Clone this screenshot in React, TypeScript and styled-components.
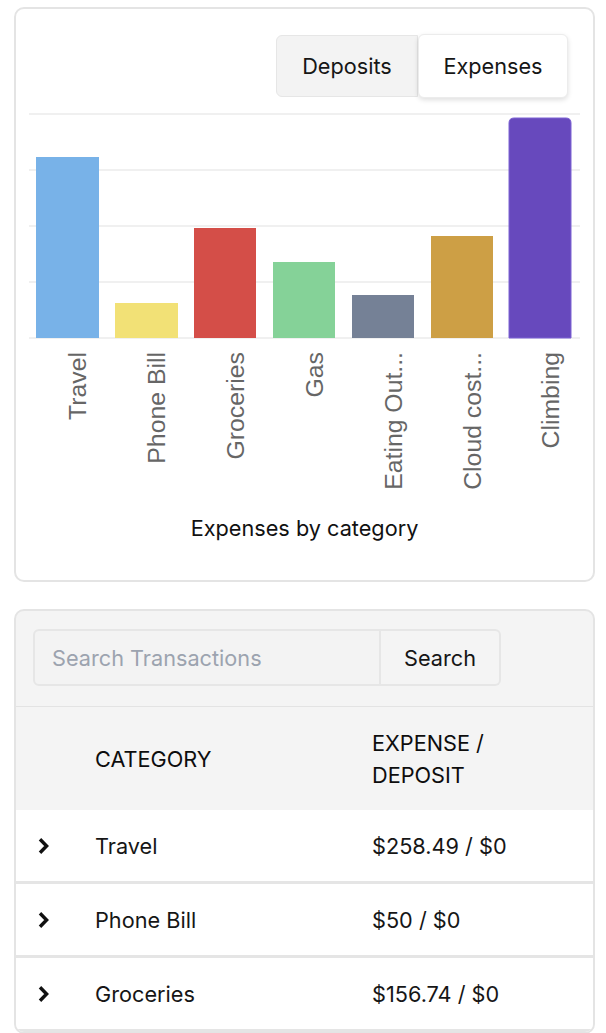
import styled, { createGlobalStyle } from "styled-components";

const GlobalStyle = createGlobalStyle`
  html, body {
    margin: 0;
    background: #ffffff;
    font-family: Inter, "Noto Sans", "Liberation Sans", sans-serif;
    color: #161616;
  }
  * { box-sizing: border-box; }
`;

const Page = styled.div`
  display: flex;
  flex-direction: column;
  gap: 27px;
  padding: 7px 11px 0 14px;
`;

const Card = styled.section`
  border: 2px solid #e4e4e4;
  border-radius: 10px;
  background: #ffffff;
`;

const Toolbar = styled.div`
  display: flex;
  justify-content: flex-end;
  padding: 25px 25px 0;
`;

const Toggle = styled.div`
  display: flex;
  align-items: center;
`;

interface IToggleButton {
  active?: boolean;
}

const ToggleButton = styled.button<IToggleButton>`
  font-family: inherit;
  font-size: 21.7px;
  color: #161616;
  cursor: pointer;
  height: ${(p) => (p.active ? "64px" : "62px")};
  width: ${(p) => (p.active ? "150px" : "142px")};
  background: ${(p) => (p.active ? "#ffffff" : "#f3f3f3")};
  border: ${(p) => (p.active ? "1px solid #ececec" : "1px solid #e6e6e6")};
  border-radius: ${(p) => (p.active ? "6px" : "6px 0 0 6px")};
  box-shadow: ${(p) => (p.active ? "0 2px 5px rgba(0,0,0,0.13)" : "none")};
  padding: 0;
`;

const ChartSvg = styled.svg`
  display: block;
  margin-top: 6px;
`;

const ChartTitle = styled.div`
  text-align: center;
  font-size: 21.7px;
  line-height: 28px;
  margin-top: 14px;
  padding-bottom: 38px;
  color: #111111;
`;

const TableCard = styled(Card)`
  background: #f4f4f4;
  overflow: hidden;
`;

const SearchBar = styled.form`
  display: flex;
  padding: 18px 0 20px 17px;
`;

const SearchInput = styled.input`
  width: 348px;
  height: 57px;
  font-family: inherit;
  font-size: 21.7px;
  padding: 0 17px;
  background: #f3f3f3;
  border: 2px solid #e6e6e6;
  border-radius: 6px 0 0 6px;
  color: #161616;
  outline: none;
  &::placeholder {
    color: #9ca3af;
  }
`;

const SearchButton = styled.button`
  width: 120px;
  height: 57px;
  font-family: inherit;
  font-size: 21.7px;
  color: #161616;
  background: #f4f4f4;
  border: 2px solid #e6e6e6;
  border-left: none;
  border-radius: 0 6px 6px 0;
  padding: 0;
`;

const Row = styled.div<{ header?: boolean }>`
  display: grid;
  grid-template-columns: 79px 277px 1fr;
  align-items: center;
  height: ${(p) => (p.header ? "104px" : "74px")};
  background: ${(p) => (p.header ? "#f4f4f4" : "#ffffff")};
  border-top: ${(p) => (p.header ? "1px solid #e3e3e3" : "none")};
  border-bottom: ${(p) => (p.header ? "none" : "3px solid #e5e5e5")};
  font-size: 21.7px;
  line-height: 32px;
`;

const HeadCell = styled.div`
  font-weight: 400;
  text-transform: uppercase;
  color: #0d0d0d;
  max-width: 150px;
`;

const Cell = styled.div`
  color: #161616;
`;

const ChevronCell = styled.div`
  display: flex;
  align-items: center;
  padding-left: 22px;
`;

const Chevron = () => (
  <svg width="12" height="18" viewBox="0 0 12 18" fill="none">
    <polyline
      points="2,2.2 8.6,9 2,15.8"
      stroke="#111"
      strokeWidth="3.4"
      strokeLinejoin="miter"
    />
  </svg>
);

interface IBar {
  label: string;
  x: number;
  w: number;
  top: number;
  color: string;
}

const bars: IBar[] = [
  { label: "Travel", x: 20, w: 63, top: 53, color: "#78b2e8" },
  { label: "Phone Bill", x: 99, w: 63, top: 199, color: "#f2e176" },
  { label: "Groceries", x: 178, w: 62, top: 124, color: "#d44e48" },
  { label: "Gas", x: 257, w: 62, top: 158, color: "#85d298" },
  { label: "Eating Out...", x: 336, w: 62, top: 191, color: "#758196" },
  { label: "Cloud cost...", x: 415, w: 62, top: 132, color: "#cd9f45" },
  { label: "Climbing", x: 493, w: 62, top: 14, color: "#6749bd" },
];

const BASE = 234;
const grid = [10, 66, 122, 178, 234];

const BarChart = () => (
  <ChartSvg width="577" height="396" viewBox="0 0 577 396">
    {grid.map((y) => (
      <line key={y} x1="13" x2="564" y1={y} y2={y} stroke="#f0f0f0" strokeWidth="2" />
    ))}
    {bars.map((b, i) => {
      const last = i === bars.length - 1;
      if (last) {
        const r = 5;
        const d = `M${b.x},${BASE} V${b.top + r} Q${b.x},${b.top} ${b.x + r},${b.top} H${
          b.x + b.w - r
        } Q${b.x + b.w},${b.top} ${b.x + b.w},${b.top + r} V${BASE} Z`;
        return <path key={b.label} d={d} fill={b.color} stroke="#7c62d4" strokeWidth="1" />;
      }
      return <rect key={b.label} x={b.x} y={b.top} width={b.w} height={BASE - b.top} fill={b.color} />;
    })}
    {bars.map((b) => {
      const tx = b.x + b.w / 2 + 18.5;
      const ty = 248;
      return (
        <text
          key={b.label}
          x={tx}
          y={ty}
          transform={`rotate(-90 ${tx} ${ty})`}
          textAnchor="end"
          fontFamily='"Liberation Sans", Arial, sans-serif'
          fontSize="24.8"
          fill="#666666"
        >
          {b.label}
        </text>
      );
    })}
  </ChartSvg>
);

const rows = [
  { category: "Travel", amount: "$258.49 / $0" },
  { category: "Phone Bill", amount: "$50 / $0" },
  { category: "Groceries", amount: "$156.74 / $0" },
];

const App = () => {
  return (
    <>
      <GlobalStyle />
      <Page>
        <Card>
          <Toolbar>
            <Toggle>
              <ToggleButton>Deposits</ToggleButton>
              <ToggleButton active>Expenses</ToggleButton>
            </Toggle>
          </Toolbar>
          <BarChart />
          <ChartTitle>Expenses by category</ChartTitle>
        </Card>

        <TableCard>
          <SearchBar onSubmit={(e) => e.preventDefault()}>
            <SearchInput placeholder="Search Transactions" />
            <SearchButton type="submit">Search</SearchButton>
          </SearchBar>
          <Row header>
            <div />
            <HeadCell>Category</HeadCell>
            <HeadCell>Expense / Deposit</HeadCell>
          </Row>
          {rows.map((r) => (
            <Row key={r.category}>
              <ChevronCell>
                <Chevron />
              </ChevronCell>
              <Cell>{r.category}</Cell>
              <Cell>{r.amount}</Cell>
            </Row>
          ))}
        </TableCard>
      </Page>
    </>
  );
};

export default App;
